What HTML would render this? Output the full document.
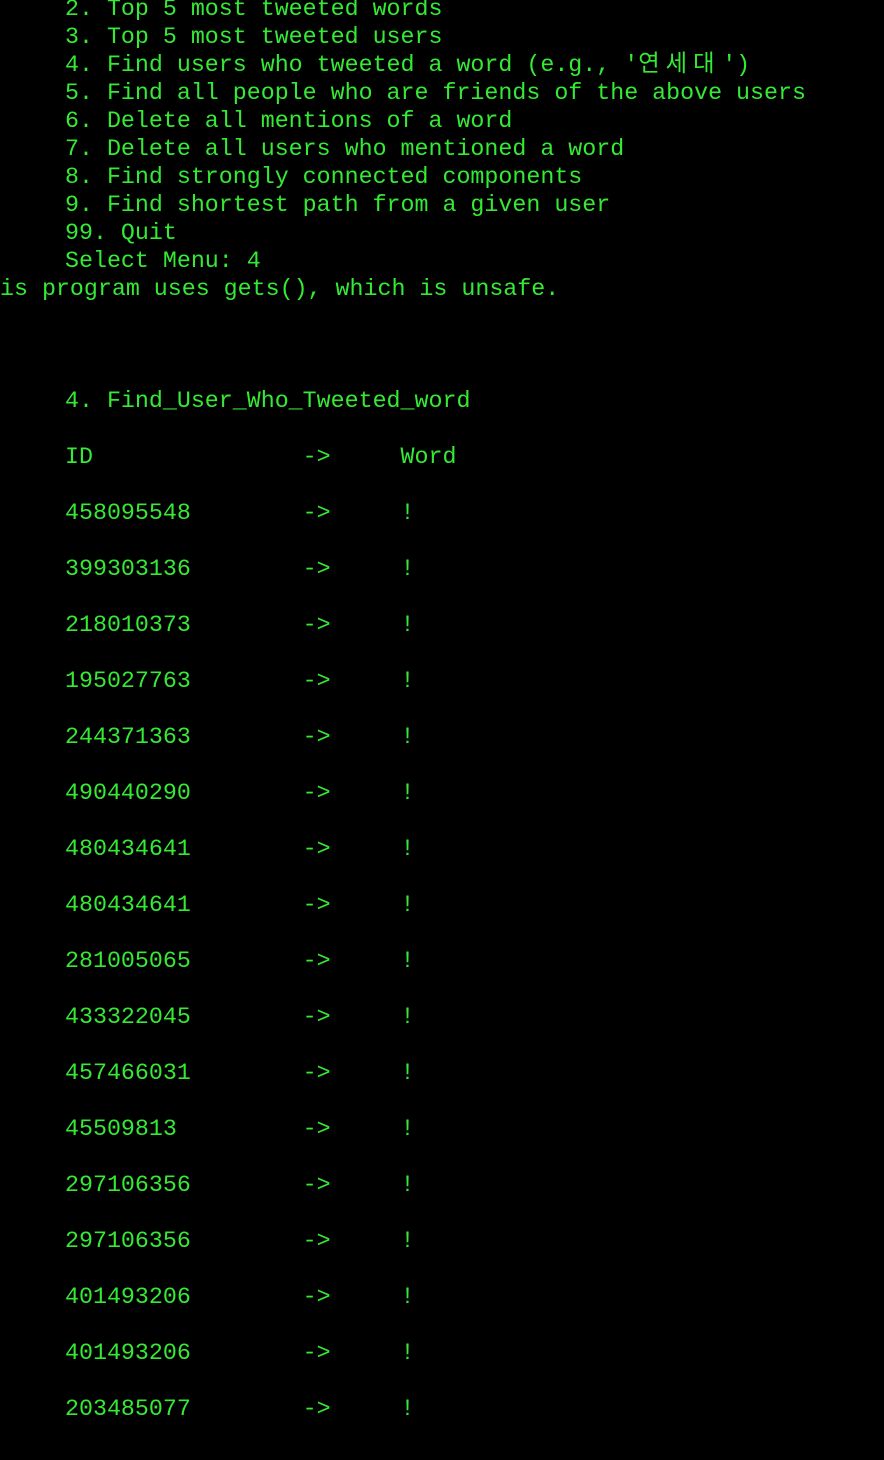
<!DOCTYPE html>
<html><head><meta charset="utf-8"><style>
html,body{margin:0;background:#000;width:884px;height:1460px;overflow:hidden}
pre{position:absolute;left:65px;top:-5px;margin:0;font-family:"Liberation Mono","Noto Sans CJK KR",monospace;font-size:23.3px;line-height:28px;color:#35ea35}
.o{margin-left:-65px;display:inline-block}
.k{display:inline-block;width:84px;letter-spacing:6px}
</style></head><body><pre>2. Top 5 most tweeted words
3. Top 5 most tweeted users
4. Find users who tweeted a word (e.g., '<span class="k">연세대</span>')
5. Find all people who are friends of the above users
6. Delete all mentions of a word
7. Delete all users who mentioned a word
8. Find strongly connected components
9. Find shortest path from a given user
99. Quit
Select Menu: 4
<span class="o">is program uses gets(), which is unsafe.</span>



4. Find_User_Who_Tweeted_word

ID               ->     Word

458095548        ->     !

399303136        ->     !

218010373        ->     !

195027763        ->     !

244371363        ->     !

490440290        ->     !

480434641        ->     !

480434641        ->     !

281005065        ->     !

433322045        ->     !

457466031        ->     !

45509813         ->     !

297106356        ->     !

297106356        ->     !

401493206        ->     !

401493206        ->     !

203485077        ->     !
</pre></body></html>
